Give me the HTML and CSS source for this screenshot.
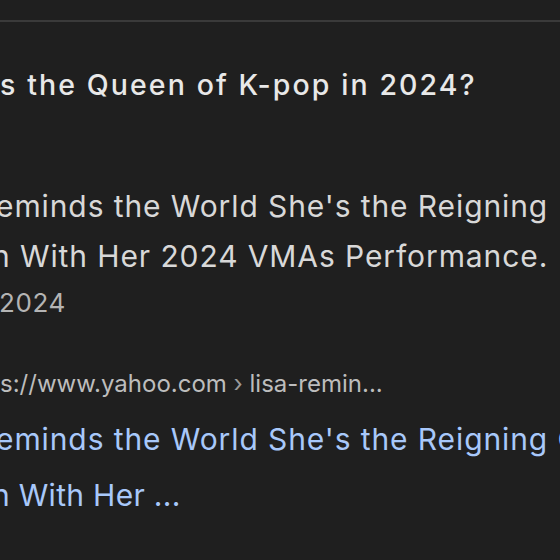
FILE: index.html
```html
<!DOCTYPE html>
<html lang="en">
<head>
<meta charset="utf-8">
<title>Who is the Queen of K-pop in 2024?</title>
<link rel="stylesheet" href="styles.css">
</head>
<body>
<div class="topbar"></div>
<main class="result">
  <h2 class="question"><span class="cut">Who i</span>s the Queen of K-pop in 2024?</h2>
  <div class="snippet">
    <span class="line l1"><span class="cut">Lisa R</span>eminds the World She's the Reigning</span>
    <span class="line l2"><span class="cut">Quee</span>n With Her 2024 VMAs Performance.</span>
  </div>
  <div class="date"><span class="cut">Sep 12, </span>2024</div>
  <div class="url"><span class="cut">http</span>s://www.yahoo.com <span class="sep">›</span> lisa-remin...</div>
  <a class="title" href="#">
    <span class="line l1"><span class="cut">Lisa R</span>eminds the World She's the Reigning Queen</span>
    <span class="line l2"><span class="cut">Quee</span>n With Her ...</span>
  </a>
</main>
</body>
</html>
```
FILE: styles.css
```css
html, body {
  margin: 0;
  padding: 0;
  background: #1f1f1f;
  overflow: hidden;
}
body {
  font-family: Inter, "Noto Sans", sans-serif;
  width: 560px;
  height: 560px;
}
.topbar {
  height: 20px;
  border-bottom: 2px solid #3a3a3a;
}
.result {
  display: flex;
  flex-direction: column;
  white-space: nowrap;
}
.cut {
  display: inline-block;
  width: 0;
  direction: rtl;
  white-space: nowrap;
}
.line {
  display: block;
}
.question {
  margin: 47px 0 0 0;
  font-size: 28.5px;
  line-height: 32px;
  font-weight: 500;
  letter-spacing: 2.1px;
  color: #e8e8e8;
}
.snippet {
  margin-top: 80px;
  font-size: 30px;
  line-height: 50px;
  letter-spacing: 0.9px;
  color: #d8d8d8;
}
.snippet .l1 { margin-left: -4px; }
.snippet .l2 { margin-left: -8px; }
.date {
  font-size: 26px;
  line-height: 44px;
  letter-spacing: 0.6px;
  color: #b4b4b4;
  margin-left: -1px;
}
.url {
  margin-top: 43px;
  font-size: 24px;
  line-height: 32px;
  color: #bdbdbd;
}
.url .sep {
  color: #9a9a9a;
}
.title {
  margin-top: 11px;
  font-size: 30px;
  line-height: 56px;
  color: #a8c8fa;
  text-decoration: none;
}
.title .l1 { margin-left: -4px; letter-spacing: 0.9px; }
.title .l2 { margin-left: -8px; letter-spacing: 0.3px; }
```
